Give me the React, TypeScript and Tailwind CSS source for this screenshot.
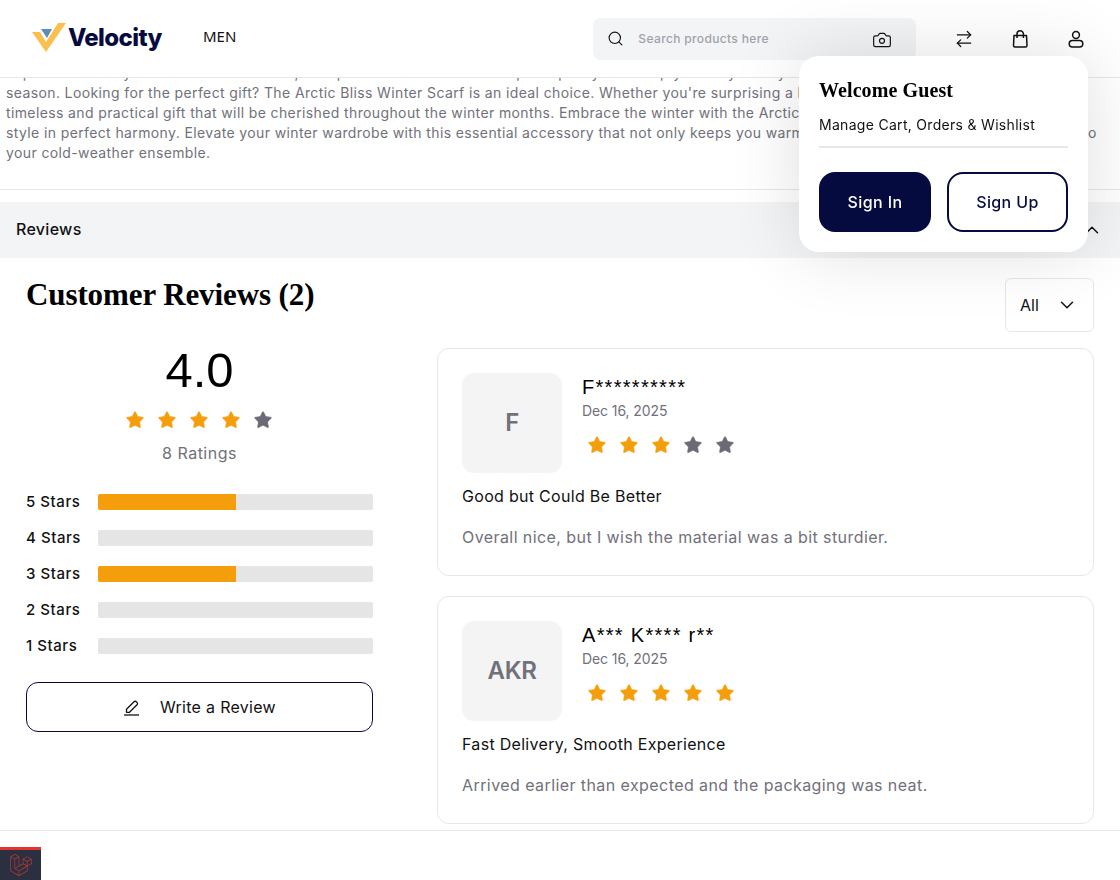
import React from 'react';
import { ArrowRightLeft, ChevronDown, ChevronUp, Search, Camera, Star } from 'lucide-react';
import { SiLaravel } from 'react-icons/si';

const sans = { fontFamily: 'Inter, sans-serif' };

const Stars = ({ filled }: { filled: number }) => (
  <div className="flex gap-[12px]">
    {[1, 2, 3, 4, 5].map((n) => (
      <Star
        key={n}
        size={20}
        strokeWidth={1}
        className={n <= filled ? 'fill-[#f59e0b] text-[#f59e0b]' : 'fill-[#6b6b76] text-[#6b6b76]'}
      />
    ))}
  </div>
);

const Bar = ({ label, width }: { label: string; width: string }) => (
  <div className="flex items-center h-[36px]">
    <span className="w-[72px] text-[15px] tracking-[0.55px] font-medium text-[#111]">{label}</span>
    <div className="w-[275px] h-[16px] rounded-[2px] bg-[#e5e5e5] overflow-hidden">
      <div className={`h-full bg-[#f59e0b] ${width}`} />
    </div>
  </div>
);

const ReviewCard = ({ initials, name, stars, title, body }: { initials: string; name: string; stars: number; title: string; body: string }) => (
  <div className="border border-[#e5e7eb] rounded-[12px] h-[228px] px-[24px] pt-[24px]">
    <div className="flex gap-[20px]">
      <div className="w-[100px] h-[100px] rounded-[12px] bg-[#f4f4f5] flex items-center justify-center text-[24px] tracking-[-0.4px] font-semibold text-[#71717a]">
        {initials}
      </div>
      <div>
        <div className="text-[20px] tracking-[1.3px] leading-[26px] mt-[1px] text-black" style={{ fontFamily: 'Liberation Sans, sans-serif' }}>{name}</div>
        <div className="text-[14px] leading-[20px] mt-[1px] tracking-[-0.1px] text-[#71717a]">Dec 16, 2025</div>
        <div className="mt-[14px] ml-[5px]"><Stars filled={stars} /></div>
      </div>
    </div>
    <div className="mt-[11px] text-[16px] tracking-[0.3px] leading-[24px] text-[#111]">{title}</div>
    <div className="mt-[17px] text-[16px] tracking-[0.42px] leading-[24px] text-[#71717a]">{body}</div>
  </div>
);

export default function App() {
  return (
    <div className="relative h-[880px] overflow-hidden bg-white" style={sans}>
      {/* Header */}
      <header className="fixed top-0 left-0 right-0 z-40 h-[78px] bg-white border-b border-[#e5e7eb] flex items-center">
        <div className="flex items-center ml-[32px] w-[171px]">
          <svg width="34" height="30" viewBox="0 0 34 30" className="-mt-[2px]">
            <path d="M9 6h11l-5 9z" fill="#5b8db8" />
            <path d="M0 9h8l6 10L26 0h8L14 29z" fill="#fbbf4f" />
          </svg>
          <span className="text-[24px] font-extrabold tracking-[-0.6px] text-[#060b3f] ml-[2px] -mt-[2px]">Velocity</span>
        </div>
        <span className="text-[15px] text-[#111] -mt-[5px]" style={{ fontFamily: 'Noto Sans, sans-serif' }}>MEN</span>
        <div className="ml-[357px] w-[323px] h-[42px] rounded-[8px] bg-[#f3f4f6] flex items-center px-[14px]">
          <Search size={17} strokeWidth={1.6} className="text-[#111]" />
          <span className="ml-[14px] text-[12px] tracking-[0.35px] font-medium text-[#a1a1aa]">Search products here</span>
          <Camera size={20} strokeWidth={1.4} className="ml-auto mr-[10px] mt-[3px] text-[#111]" />
        </div>
        <div className="ml-[38px] flex items-center gap-[36px]">
          <ArrowRightLeft size={20} strokeWidth={1.5} className="text-[#111]" />
          <svg width="20" height="20" viewBox="0 0 20 20" fill="none" stroke="#111" strokeWidth="1.5" strokeLinejoin="round">
            <path d="M4 6.500h12.500l.5 10a1.500 1.500 0 0 1-1.500 1.500h-10.500a1.500 1.500 0 0 1-1.500-1.500z" />
            <path d="M7 9V5a3.200 3.200 0 0 1 6.400 0v4" />
          </svg>
          <svg width="20" height="20" viewBox="0 0 20 20" fill="none" stroke="#111" strokeWidth="1.5">
            <circle cx="10" cy="6" r="3.4" />
            <rect x="3.2" y="11.5" width="13.6" height="6.5" rx="3.25" />
          </svg>
        </div>
      </header>

      {/* Account popup */}
      <div className="absolute z-50 left-[799px] top-[56px] w-[289px] h-[196px] rounded-[20px] bg-white shadow-[0_0_70px_rgba(0,0,0,0.13)] px-[20px] pt-[21px]">
        <div className="text-[20px] tracking-[0.1px] leading-[26px] font-bold text-black" style={{ fontFamily: 'Liberation Serif, serif' }}>Welcome Guest</div>
        <div className="mt-[12px] text-[14px] tracking-[0.3px] leading-[20px] text-[#111] pb-[11px] border-b-2 border-[#e5e7eb]">Manage Cart, Orders &amp; Wishlist</div>
        <div className="mt-[24px] flex gap-[16px]">
          <button className="w-[112px] h-[60px] rounded-[16px] bg-[#060b3f] text-white text-[16px] tracking-[0.4px] font-medium">Sign In</button>
          <button className="w-[121px] h-[60px] rounded-[16px] border-2 border-[#060b3f] text-[#060b3f] text-[16px] tracking-[0.4px] font-medium">Sign Up</button>
        </div>
      </div>

      {/* Description */}
      <div className="pt-[63px] px-[6px] h-[190px] border-b border-[#e5e7eb] text-[14px] tracking-[0.38px] leading-[20px] text-[#71717a] whitespace-nowrap overflow-hidden">
        <p>Experience luxury and warmth this winter, with premium materials and superb quality that keep you cosy all day long in every</p>
        <p>season. Looking for the perfect gift? The Arctic Bliss Winter Scarf is an ideal choice. Whether you're surprising a loved one, this is a</p>
        <p>timeless and practical gift that will be cherished throughout the winter months. Embrace the winter with the Arctic Bliss scarf, warmth and</p>
        <p>style in perfect harmony. Elevate your winter wardrobe with this essential accessory that not only keeps you warm but also adds a touch of sophistication to</p>
        <p>your cold-weather ensemble.</p>
      </div>

      {/* Reviews bar */}
      <div className="mt-[12px] h-[56px] bg-[#f3f4f6] flex items-center justify-between pl-[16px] pr-[17px]">
        <span className="text-[16px] tracking-[0.3px] font-medium text-[#111] -mt-[2px]">Reviews</span>
        <ChevronUp size={22} strokeWidth={1.6} className="text-[#111]" />
      </div>

      {/* Reviews */}
      <div className="h-[573px] border-b border-[#e5e7eb] pl-[26px] pr-[26px] pt-[20px]">
        <div className="flex justify-between h-[70px]">
          <h2 className="text-[31px] tracking-[-0.1px] leading-[34px] font-bold text-black" style={{ fontFamily: 'Liberation Serif, serif' }}>Customer Reviews (2)</h2>
          <div className="w-[89px] h-[54px] border border-[#e5e7eb] rounded-[6px] flex items-center justify-between pl-[14px] pr-[15px] text-[16px] text-[#111]">
            All <ChevronDown size={22} strokeWidth={1.6} />
          </div>
        </div>
        <div className="flex">
          <div className="w-[347px]">
            <div className="flex flex-col items-center">
              <div className="text-[49px] leading-[48px] text-black mt-[-2px]" style={{ fontFamily: 'Liberation Sans, sans-serif' }}>4.0</div>
              <div className="mt-[16px] -ml-[2px]"><Stars filled={4} /></div>
              <div className="mt-[11px] text-[16px] tracking-[0.5px] leading-[24px] text-[#71717a]">8 Ratings</div>
            </div>
            <div className="mt-[19px]">
              <Bar label="5 Stars" width="w-1/2" />
              <Bar label="4 Stars" width="w-0" />
              <Bar label="3 Stars" width="w-1/2" />
              <Bar label="2 Stars" width="w-0" />
              <Bar label="1 Stars" width="w-0" />
            </div>
            <button className="mt-[18px] w-full h-[50px] rounded-[12px] border border-[#060b3f] flex items-center justify-center gap-[20px] text-[16px] tracking-[0.3px] text-[#111]">
              <svg width="17" height="17" viewBox="0 0 17 17" fill="none" stroke="#111" strokeWidth="1.3" strokeLinejoin="round">
                <path d="M3.500 13.300V10.300L11 2.800a1.700 1.700 0 0 1 2.400 0l.6.6a1.700 1.700 0 0 1 0 2.400L6.500 13.300z" />
                <path d="M1 16h15" />
              </svg>
              Write a Review
            </button>
          </div>
          <div className="ml-[64px] w-[657px] flex flex-col gap-[20px]">
            <ReviewCard initials="F" name="F**********" stars={3} title="Good but Could Be Better" body="Overall nice, but I wish the material was a bit sturdier." />
            <ReviewCard initials="AKR" name="A*** K**** r**" stars={5} title="Fast Delivery, Smooth Experience" body="Arrived earlier than expected and the packaging was neat." />
          </div>
        </div>
      </div>

      {/* Debugbar */}
      <div className="absolute left-0 bottom-0 w-[41px] h-[33px] bg-[#2a3040] border-t-[3px] border-[#e3342f] flex items-center justify-center">
        <SiLaravel size={22} className="text-[#b83a34]" />
      </div>
    </div>
  );
}
